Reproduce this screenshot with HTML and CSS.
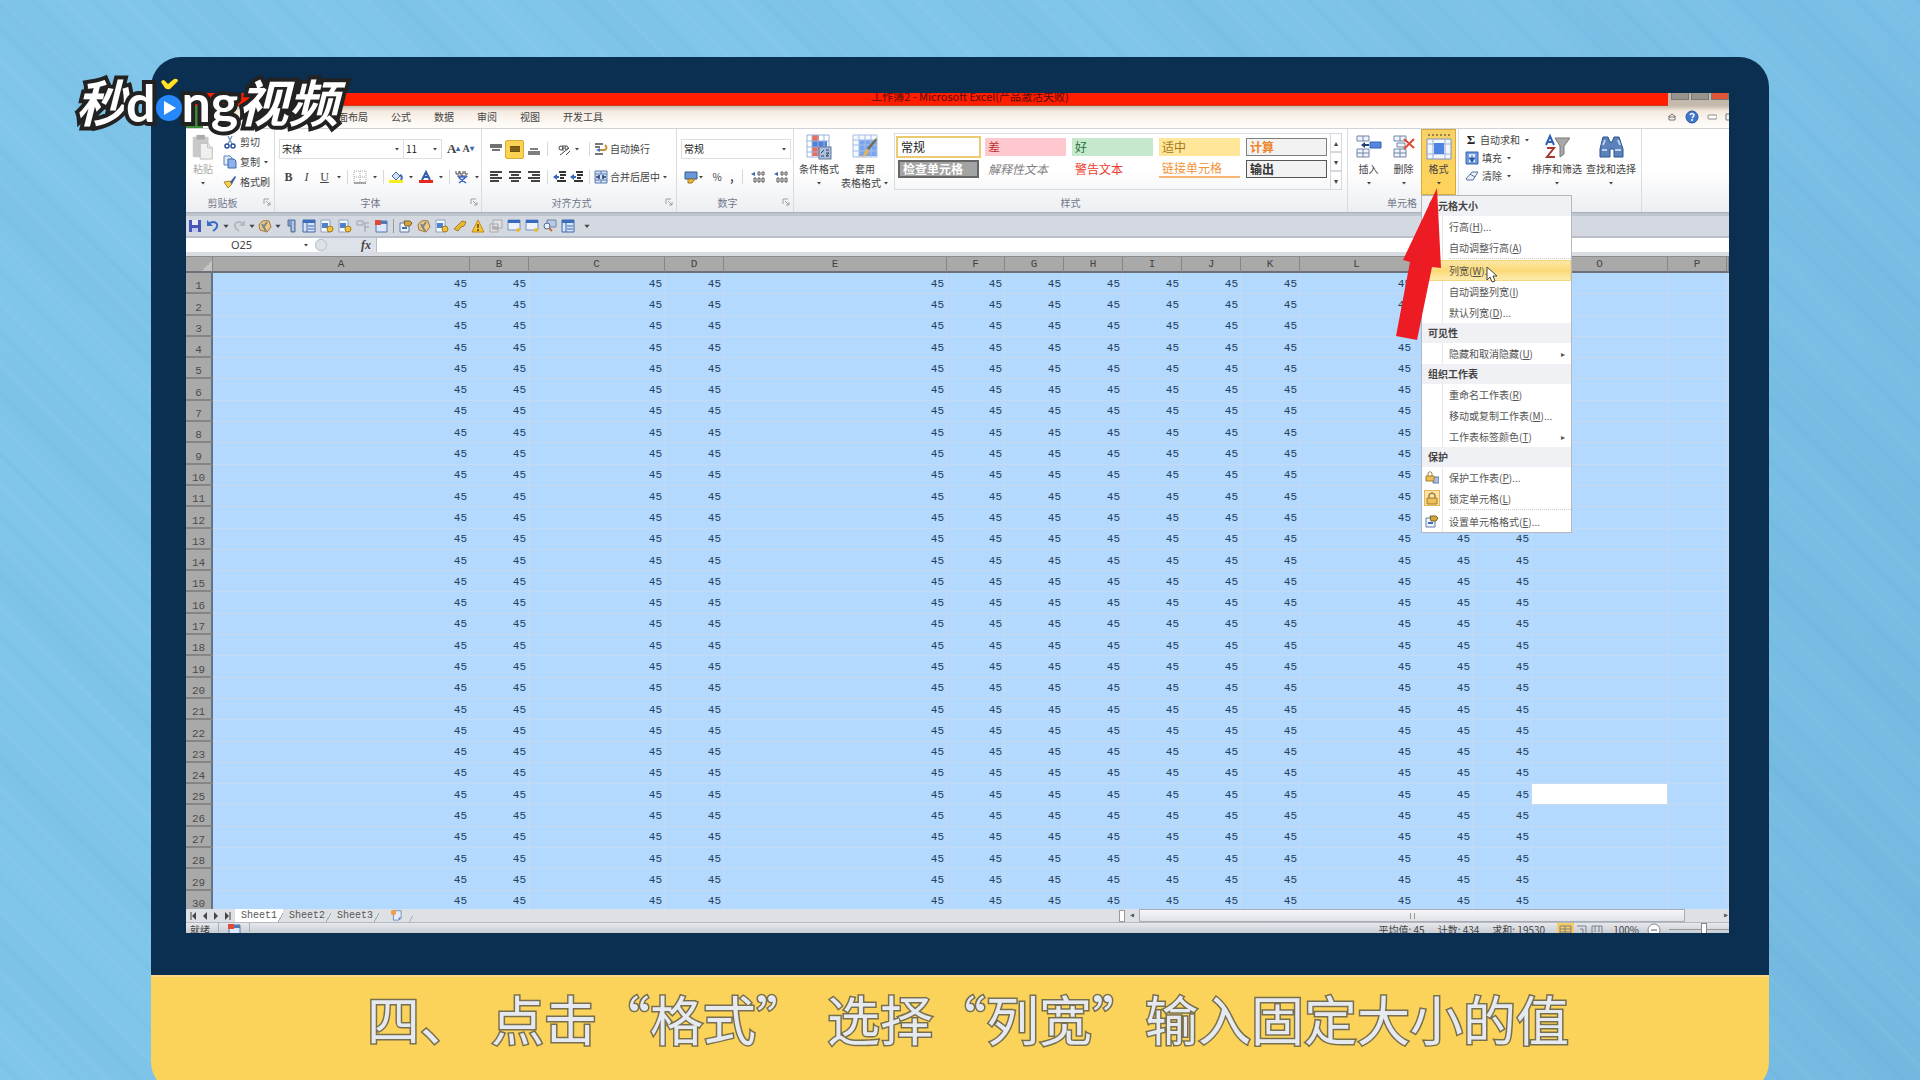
FILE: index.html
```
<!DOCTYPE html>
<html lang="zh-CN">
<head>
<meta charset="utf-8">
<title>秒dǒng视频</title>
<link rel="stylesheet" href="styles.css">
</head>
<body>
<svg class="defs" aria-hidden="true">
  <symbol id="caret" viewBox="0 0 6 6"><path d="M1 2h4L3 4.500z" fill="#444"/></symbol>
  <symbol id="launch" viewBox="0 0 8 8"><path d="M1 6V1h5M3 3l4 4M7 4v3H4" fill="none" stroke="#9a9fa8"/></symbol>
  <symbol id="paste" viewBox="0 0 24 28"><rect x="1" y="3" width="17" height="22" rx="1" fill="#c9c9c9"/><rect x="5" y="1" width="9" height="5" fill="#aaa"/><path d="M9 10h8l5 5v12H9z" fill="#f0f0f0" stroke="#bbb"/><path d="M17 10v5h5" fill="none" stroke="#bbb"/></symbol>
  <symbol id="cut" viewBox="0 0 14 14"><path d="M5 1l4 8M9 1L5 9" stroke="#7c9cc8" stroke-width="1.500"/><circle cx="4" cy="11" r="2" fill="none" stroke="#274f9e" stroke-width="1.500"/><circle cx="10" cy="11" r="2" fill="none" stroke="#274f9e" stroke-width="1.500"/></symbol>
  <symbol id="copy" viewBox="0 0 14 14"><path d="M1 1h6l2 2v7H1z" fill="#dfeafb" stroke="#5b83bd"/><path d="M5 4h6l2 2v7H5z" fill="#8db4ea" stroke="#3f69ad"/></symbol>
  <symbol id="brush" viewBox="0 0 14 14"><path d="M1 7l6-1 2 3-4 4z" fill="#f2cf52" stroke="#a9862b"/><path d="M7 7l5-6 1 1-4 7z" fill="#3c5d98"/></symbol>
  <symbol id="border" viewBox="0 0 14 14"><path d="M1 1h12v12H1zM7 1v12M1 7h12" fill="none" stroke="#aaa" stroke-dasharray="1 1"/><path d="M1 13h12" stroke="#666"/></symbol>
  <symbol id="fill" viewBox="0 0 14 14"><path d="M3 6l4-4 4 4-4 4z" fill="#cfe0f8" stroke="#3b66a8"/><path d="M11 5q3 1 1 5" stroke="#3b66a8" stroke-width="2" fill="none"/><path d="M0 10h14v3H0z" fill="#f7ec1c"/></symbol>
  <symbol id="fcolor" viewBox="0 0 14 14"><path d="M3 10l4-8 4 8M5 7h4" fill="none" stroke="#2f5daa" stroke-width="2"/><path d="M0 10h14v3H0z" fill="#e8281e"/></symbol>
  <symbol id="phon" viewBox="0 0 14 14"><path d="M1 1v3h3V1m1 0v3h3V1m2 0v3h3M2 6h10" fill="none" stroke="#444"/><path d="M7 5v2M3 7h8L4 13M4 8l7 5" stroke="#3a67c0" stroke-width="1.500" fill="none"/></symbol>
  <symbol id="vtop" viewBox="0 0 14 14"><path d="M1 3h12M1 5h12M3 8h8" stroke="#444" stroke-width="1.500"/></symbol>
  <symbol id="vmid" viewBox="0 0 14 14"><path d="M2 4h10v6H2z" fill="#6d5312"/><path d="M2 6h10M2 8h10" stroke="#8f6d18"/></symbol>
  <symbol id="vbot" viewBox="0 0 14 14"><path d="M3 7h8M1 10h12M1 12h12" stroke="#555" stroke-width="1.500"/></symbol>
  <symbol id="left" viewBox="0 0 14 14"><path d="M1 2h12M1 5h8M1 8h12M1 11h9" stroke="#444" stroke-width="2"/></symbol>
  <symbol id="center" viewBox="0 0 14 14"><path d="M1 2h12M3 5h8M1 8h12M3 11h8" stroke="#444" stroke-width="2"/></symbol>
  <symbol id="right" viewBox="0 0 14 14"><path d="M1 2h12M5 5h8M1 8h12M4 11h9" stroke="#444" stroke-width="2"/></symbol>
  <symbol id="indent" viewBox="0 0 14 14"><path d="M6 2h7M7 5h6M7 8h4M4 11h9" stroke="#333" stroke-width="2"/><path d="M0 7l4-3v2h2v2H4v2z" fill="#3567b5"/></symbol>
  <symbol id="orient" viewBox="0 0 14 14"><circle cx="4" cy="6" r="2" fill="none" stroke="#444"/><path d="M6 3v6M8 3v4q4 1 3-2-1-2-3 0M3 13L12 6M9 13l4-4" fill="none" stroke="#444"/></symbol>
  <symbol id="wrap" viewBox="0 0 14 14"><path d="M1 2h8M1 5h5M1 12h8" stroke="#777" stroke-width="2"/><path d="M4 8h7q3-2 0-5" fill="none" stroke="#c6903c" stroke-width="2"/><path d="M2 8l4-2v4z" fill="#4673bd"/></symbol>
  <symbol id="merge" viewBox="0 0 14 14"><path d="M1 1h12v12H1z" fill="#d2e1f6" stroke="#5a7cad"/><path d="M1 4h12M1 10h12M7 1v3M7 10v3" stroke="#5a7cad"/><path d="M2 7h3M12 7H9M5 5v4M9 5v4" stroke="#233d70" stroke-width="1.500"/></symbol>
  <symbol id="money" viewBox="0 0 14 14"><path d="M1 2h12v7H1z" fill="#6b97d8" stroke="#37588f"/><path d="M4 9h7l-3 4H4z" fill="#eab83f" stroke="#9b7424"/></symbol>
  <symbol id="dec" viewBox="0 0 14 14"><path d="M0 4l4-2v4z" fill="#3567b5"/><path d="M7 2h2v3H7zM11 2h2v3h-2zM3 8h2v4H3zM7 8h2v4H7zM11 8h2v4h-2z" fill="none" stroke="#555"/></symbol>
  <symbol id="cond" viewBox="0 0 26 26"><path d="M1 1h22v22H1z" fill="#fff"/><path d="M6 1h7v6H6zM6 13h7v9H6z" fill="#ee6b59"/><path d="M6 7h15v6H6z" fill="#4f80d8"/><path d="M1 1h22v22H1zM1 7h22M1 13h22M1 18h22M6 1v22M12 1v22M18 1v22" fill="none" stroke="#9bb2dc"/><rect x="13" y="13" width="12" height="12" fill="#aebfd9" stroke="#60769c"/><path d="M15 19l3-3M15 22h3M20 16h3M20 19h3l-3 3h3" stroke="#263d66" fill="none"/></symbol>
  <symbol id="tablefmt" viewBox="0 0 26 26"><path d="M1 1h24v22H1z" fill="#f4f8ff"/><path d="M7 6h18v16H7z" fill="#78a6ef"/><path d="M1 1h24v22H1zM1 6h24M1 11h24M1 17h24M7 1v22M13 1v22M19 1v22" fill="none" stroke="#a8bde4"/><path d="M25 6l-8 10-2-2 9-10z" fill="#7a6a50"/><path d="M17 16q-1 7-8 7 4-3 5-8z" fill="#e8b548"/></symbol>
  <symbol id="insert" viewBox="0 0 26 26"><path d="M1 2h12v5H1zM7 2v5M1 15h12v8H1zM7 15v8M1 19h12" fill="#eef4fd" stroke="#7385a6"/><path d="M14 8h11v6H14z" fill="#5687dc" stroke="#3564b5"/><path d="M5 11l4-3v2h4v2H9v2z" fill="#233f78"/></symbol>
  <symbol id="delete" viewBox="0 0 26 26"><path d="M3 2h12v5H3zM9 2v5M3 15h12v8H3zM9 15v8M3 19h12M6 9h8v4H6z" fill="#eef4fd" stroke="#7385a6"/><path d="M13 5l10 9M23 5L13 15" stroke="#e04a32" stroke-width="2"/></symbol>
  <symbol id="format" viewBox="0 0 26 26"><path d="M1 5h24v20H1z" fill="#f2f6fd" stroke="#7f93b8"/><path d="M1 10h24M1 20h24M7 5v20M19 5v20" stroke="#9cb1d6"/><path d="M8 9h10v11H8z" fill="#4d84e2"/><path d="M2 1h22" stroke="#333" stroke-dasharray="2 2"/></symbol>
  <symbol id="down" viewBox="0 0 14 14"><path d="M1 1h12v12H1z" fill="#6d9be0" stroke="#3c65a8"/><path d="M4 3h6v8H4z" fill="#e5effc"/><path d="M7 4v3M4 7h6l-3 4z" fill="#2d5dac" stroke="#2d5dac"/></symbol>
  <symbol id="eraser" viewBox="0 0 14 14"><path d="M1 10l6-7h6l-5 8H2z" fill="#eaf1fb" stroke="#58719c"/><path d="M5 5l5 3" stroke="#58719c"/></symbol>
  <symbol id="sort" viewBox="0 0 26 26"><path d="M2 11l4-9 4 9M4 8h5" fill="none" stroke="#2f5fb4" stroke-width="2"/><path d="M3 14h7l-7 9h8" fill="none" stroke="#a8382e" stroke-width="2"/><path d="M11 4h15l-6 8v8l-4 3V12z" fill="#a8a8a8" stroke="#777"/></symbol>
  <symbol id="find" viewBox="0 0 26 26"><path d="M5 3h5l2 5h2l2-5h5l4 12v8h-9v-8h-4v8H2v-8z" fill="#5c82bb" stroke="#2f5290"/><path d="M5 11l2-5M20 6l2 5M4 16h5M17 16h6" stroke="#bdd2f2" stroke-width="2"/></symbol>
  <symbol id="save" viewBox="0 0 14 14"><path d="M1 1h12v12H1z" fill="#4a55b8"/><path d="M4 1h6v5H4z" fill="#e9edfb"/><path d="M4 9h6v4H4z" fill="#c4cbef"/></symbol>
  <symbol id="undo" viewBox="0 0 14 14"><path d="M2 5q6-4 9 0 1 4-4 7" fill="none" stroke="#3a6cc6" stroke-width="2"/><path d="M1 1v6h6z" fill="#3a6cc6"/></symbol>
  <symbol id="redo" viewBox="0 0 14 14"><path d="M12 5Q6 1 3 5q-1 4 4 7" fill="none" stroke="#b3b8c2" stroke-width="2"/><path d="M13 1v6H7z" fill="#b3b8c2"/></symbol>
  <symbol id="palette" viewBox="0 0 14 14"><path d="M1 6q3-6 10-4l2 6-4 5-7-2z" fill="#ecca83" stroke="#a2783b"/><path d="M4 5l4 7M9 3l-4 6" stroke="#7d858f" stroke-width="2"/></symbol>
  <symbol id="pilcrow" viewBox="0 0 14 14"><path d="M4 1h7v12H7V7H4z" fill="#7f9cc6" stroke="#54729f"/><path d="M9 2v10" stroke="#e9f0fb"/></symbol>
  <symbol id="window" viewBox="0 0 14 14"><path d="M1 1h12v12H1z" fill="#d5e4f8" stroke="#3e67a9"/><path d="M1 1h12v3H1z" fill="#3e6dbb"/><path d="M5 4v9M6 7h6M6 10h6" stroke="#3e67a9"/></symbol>
  <symbol id="pagegear" viewBox="0 0 14 14"><path d="M1 1h9v12H1z" fill="#f5f8fd" stroke="#8aa0c2"/><path d="M2 4h6v5H2z" fill="#4f82cb"/><circle cx="10" cy="10" r="3" fill="#eec13e" stroke="#a57b1f"/></symbol>
  <symbol id="greyform" viewBox="0 0 14 14"><path d="M1 2h6v4H1zM8 4h5M8 8h5M9 4v9" fill="none" stroke="#9ba1ab"/></symbol>
  <symbol id="calendar" viewBox="0 0 14 14"><path d="M2 2h11v11H2z" fill="#dbe7fa" stroke="#5078b5"/><path d="M1 1h6v5H1z" fill="#df4936"/><path d="M7 2h6v3H7z" fill="#5078b5"/></symbol>
  <symbol id="newsheet" viewBox="0 0 14 14"><path d="M4 2h9v9l-3 2H4z" fill="#e3ecfa" stroke="#6c87b8"/><path d="M10 13v-3h3" fill="#5b83c9"/><circle cx="4" cy="4" r="3" fill="#efa044"/></symbol>
  <symbol id="props" viewBox="0 0 14 14"><path d="M1 4h9v9H1z" fill="#eef3fb" stroke="#5e7ba8"/><path d="M5 2h6l2 2-2 3H6z" fill="#d5a63b" stroke="#7a622b"/><path d="M3 9h5" stroke="#3e6dbb" stroke-width="2"/></symbol>
  <symbol id="link" viewBox="0 0 14 14"><path d="M1 10l4-4 4-4 4 1-2 4-3 1-3 4z" fill="#e7b932" stroke="#a67e20"/></symbol>
  <symbol id="warn" viewBox="0 0 14 14"><path d="M7 1l6 12H1z" fill="#f6c632" stroke="#bd891b"/><path d="M7 5v4M7 10v2" stroke="#5d4411" stroke-width="1.500"/></symbol>
  <symbol id="greypages" viewBox="0 0 14 14"><path d="M4 1h9v8H4zM1 5h8v8H1z" fill="#e1e1e3" stroke="#a7a7ab"/><path d="M3 8h6M3 10h6" stroke="#999"/></symbol>
  <symbol id="wingear" viewBox="0 0 14 14"><path d="M1 1h12v10H1z" fill="#eef4fd" stroke="#7390bd"/><path d="M1 1h12v3H1z" fill="#376ac2"/><circle cx="11" cy="11" r="2" fill="#ecbb36"/></symbol>
  <symbol id="lens" viewBox="0 0 14 14"><path d="M4 1h9v7H4z" fill="#b9cae3" stroke="#6e84a8"/><circle cx="4" cy="7" r="3" fill="#eaf2fd" stroke="#4c6796"/><path d="M6 9l3 3" stroke="#c46f2d" stroke-width="2"/></symbol>
  <symbol id="lock" viewBox="0 0 14 14"><path d="M4 7V4q3-4 6 0v3" fill="none" stroke="#a48343" stroke-width="1.500"/><path d="M2 7h10v6H2z" fill="#ecbf58" stroke="#a57b2c"/></symbol>
  <symbol id="locksheet" viewBox="0 0 14 14"><path d="M8 7h6v6H8z" fill="#a8bddf" stroke="#5f7baa"/><path d="M3 6V3q2-3 4 0v3" fill="none" stroke="#a48343"/><path d="M1 6h8v5H1z" fill="#ecbf58" stroke="#a57b2c"/></symbol>
</svg>

<header class="logo" aria-label="秒dǒng视频">
  <span class="logo-cn">秒</span><span class="logo-en">d</span>
  <svg class="logo-o" viewBox="0 0 26 46"><path d="M5 5q2-4 5 0l2 2 6-5q4-1 4 2l-8 8q-3 1-5-1z" fill="#ffe32a" stroke="#222" stroke-width="1"/><circle cx="13" cy="31" r="13" fill="#2589fb"/><path d="M8 24v14l12-7z" fill="#fff"/></svg>
  <span class="logo-en">ng</span><span class="logo-cn">视频</span>
</header>

<main class="monitor">
  <section class="screen">
    <div class="titlebar"><span>工作簿2 - Microsoft Excel(产品激活失败)</span>
      <div class="winbtns"><i></i><i></i><i class="close"></i></div>
    </div>
    <nav class="tabs">
      <button class="file" aria-label="文件"></button>
      <button>页面布局</button><button>公式</button><button>数据</button><button>审阅</button><button>视图</button><button>开发工具</button>
      <div class="tabs-right">
        <svg width="10" height="10" viewBox="0 0 10 10"><path d="M1 5l4-3 4 3M2 8h6V5H2z" fill="none" stroke="#777"/></svg>
        <svg width="14" height="14" viewBox="0 0 14 14"><circle cx="7" cy="7" r="6" fill="#3f78cc" stroke="#2a5699"/><path d="M5 5q2-3 4 0 0 1-2 3M7 9v2" fill="none" stroke="#fff" stroke-width="1.500"/></svg>
        <svg width="10" height="10" viewBox="0 0 10 10"><rect x="1" y="3" width="9" height="4" rx="1" fill="#fff" stroke="#888"/></svg>
        <svg width="4" height="10" viewBox="0 0 4 10"><path d="M4 2H1v6h3" fill="none" stroke="#777"/></svg>
      </div>
    </nav>

    <div class="ribbon">
      <section class="group g-clip">
        <div class="body">
          <button class="big dim"><svg class="i26"><use href="#paste"/></svg>粘贴<svg class="car"><use href="#caret"/></svg></button>
          <div class="stack">
            <button><svg class="i14"><use href="#cut"/></svg>剪切</button>
            <button><svg class="i14"><use href="#copy"/></svg>复制<svg class="car"><use href="#caret"/></svg></button>
            <button><svg class="i14"><use href="#brush"/></svg>格式刷</button>
          </div>
        </div>
        <h2>剪贴板</h2><svg class="launch"><use href="#launch"/></svg>
      </section>

      <section class="group g-font">
        <div class="body rows">
          <div class="line">
            <span class="combo fontname"><select aria-label="字体"><option>宋体</option></select><svg class="car"><use href="#caret"/></svg></span>
            <span class="combo size"><select aria-label="字号"><option>11</option></select><svg class="car"><use href="#caret"/></svg></span>
            <button class="grow">A<sup>▴</sup></button><button class="grow small">A<sup>▾</sup></button>
          </div>
          <div class="line fontstyle">
            <button class="serif"><b>B</b></button><button class="serif"><i>I</i></button><button class="serif"><u>U</u></button><svg class="car"><use href="#caret"/></svg>
            <i class="vsep"></i>
            <button><svg class="i14"><use href="#border"/></svg></button><svg class="car"><use href="#caret"/></svg>
            <i class="vsep"></i>
            <button><svg class="i14"><use href="#fill"/></svg></button><svg class="car"><use href="#caret"/></svg>
            <button><svg class="i14"><use href="#fcolor"/></svg></button><svg class="car"><use href="#caret"/></svg>
            <i class="vsep"></i>
            <button><svg class="i14"><use href="#phon"/></svg></button><svg class="car"><use href="#caret"/></svg>
          </div>
        </div>
        <h2>字体</h2><svg class="launch"><use href="#launch"/></svg>
      </section>

      <section class="group g-align">
        <div class="body rows">
          <div class="line">
            <button class="cell"><svg class="i14"><use href="#vtop"/></svg></button><button class="cell on"><svg class="i14"><use href="#vmid"/></svg></button><button class="cell"><svg class="i14"><use href="#vbot"/></svg></button>
            <i class="vsep"></i>
            <button class="pair"><svg class="i14"><use href="#orient"/></svg><svg class="car"><use href="#caret"/></svg></button>
            <i class="vsep"></i>
            <button class="txt"><svg class="i14"><use href="#wrap"/></svg>自动换行</button>
          </div>
          <div class="line">
            <button class="cell"><svg class="i14"><use href="#left"/></svg></button><button class="cell"><svg class="i14"><use href="#center"/></svg></button><button class="cell"><svg class="i14"><use href="#right"/></svg></button>
            <i class="vsep"></i>
            <button class="pair"><svg class="i14"><use href="#indent"/></svg><svg class="i14"><use href="#indent"/></svg></button>
            <i class="vsep"></i>
            <button class="txt"><svg class="i14"><use href="#merge"/></svg>合并后居中<svg class="car"><use href="#caret"/></svg></button>
          </div>
        </div>
        <h2>对齐方式</h2><svg class="launch"><use href="#launch"/></svg>
      </section>

      <section class="group g-num">
        <div class="body rows">
          <div class="line"><span class="combo numfmt"><select aria-label="数字格式"><option>常规</option></select><svg class="car"><use href="#caret"/></svg></span></div>
          <div class="line spread">
            <button><svg class="i14"><use href="#money"/></svg><svg class="car"><use href="#caret"/></svg></button><button>%</button><button><b>,</b></button><i class="vsep"></i>
            <button><svg class="i14"><use href="#dec"/></svg></button><button><svg class="i14"><use href="#dec"/></svg></button>
          </div>
        </div>
        <h2>数字</h2><svg class="launch"><use href="#launch"/></svg>
      </section>

      <section class="group g-style">
        <div class="body">
          <button class="big"><svg class="i26"><use href="#cond"/></svg>条件格式<svg class="car"><use href="#caret"/></svg></button>
          <button class="big"><svg class="i26"><use href="#tablefmt"/></svg>套用<span>表格格式<svg class="car"><use href="#caret"/></svg></span></button>
          <div class="gallery">
            <button class="s-normal">常规</button><button class="s-bad">差</button><button class="s-good">好</button><button class="s-mid">适中</button><button class="s-calc">计算</button>
            <button class="s-check">检查单元格</button><button class="s-note">解释性文本</button><button class="s-warn">警告文本</button><button class="s-linked">链接单元格</button><button class="s-out">输出</button>
          </div>
          <div class="galbtns"><button aria-label="上移">▴</button><button aria-label="下移">▾</button><button aria-label="更多">▾</button></div>
        </div>
        <h2>样式</h2>
      </section>

      <section class="group g-cells">
        <div class="body">
          <button class="big"><svg class="i26"><use href="#insert"/></svg>插入<svg class="car"><use href="#caret"/></svg></button>
          <button class="big"><svg class="i26"><use href="#delete"/></svg>删除<svg class="car"><use href="#caret"/></svg></button>
          <button class="big active"><svg class="i26"><use href="#format"/></svg>格式<svg class="car"><use href="#caret"/></svg></button>
        </div>
        <h2>单元格</h2>
      </section>

      <section class="group g-edit">
        <div class="body">
          <div class="stack">
            <button><b class="sigma">Σ</b>自动求和<svg class="car"><use href="#caret"/></svg></button>
            <button><svg class="i14"><use href="#down"/></svg>填充<svg class="car"><use href="#caret"/></svg></button>
            <button><svg class="i14"><use href="#eraser"/></svg>清除<svg class="car"><use href="#caret"/></svg></button>
          </div>
          <button class="big"><svg class="i26"><use href="#sort"/></svg>排序和筛选<svg class="car"><use href="#caret"/></svg></button>
          <button class="big"><svg class="i26"><use href="#find"/></svg>查找和选择<svg class="car"><use href="#caret"/></svg></button>
        </div>
      </section>
    </div>

    <div class="qat">
      <svg><use href="#save"/></svg><svg><use href="#undo"/></svg><svg class="car"><use href="#caret"/></svg><svg><use href="#redo"/></svg><svg class="car"><use href="#caret"/></svg><svg><use href="#palette"/></svg><svg class="car"><use href="#caret"/></svg><svg><use href="#pilcrow"/></svg><svg><use href="#window"/></svg><svg><use href="#pagegear"/></svg><svg><use href="#pagegear"/></svg><svg><use href="#greyform"/></svg><svg><use href="#calendar"/></svg><i class="vsep"></i><svg><use href="#props"/></svg><svg><use href="#palette"/></svg><svg><use href="#pagegear"/></svg><svg><use href="#link"/></svg><svg><use href="#warn"/></svg><svg><use href="#greypages"/></svg><svg><use href="#wingear"/></svg><svg><use href="#wingear"/></svg><svg><use href="#lens"/></svg><svg><use href="#window"/></svg><svg class="car last"><use href="#caret"/></svg>
    </div>

    <div class="formulabar">
      <input class="namebox" value="O25" aria-label="名称框"><svg class="car"><use href="#caret"/></svg>
      <span class="fx"><i></i><em>fx</em></span>
      <input class="formula" aria-label="编辑栏">
    </div>

    <div class="sheet">
      <table>
        <colgroup id="cols"></colgroup>
        <thead><tr id="letters"></tr></thead>
        <tbody id="rows"></tbody>
      </table>
    </div>

    <div class="sheetbar">
      <svg class="navs" viewBox="0 0 48 10"><path d="M5 1v8M44 1v8" stroke="#444"/><path d="M10 1v8L6 5zM21 1v8l-4-4zM28 1v8l4-4zM39 1v8l4-4z" fill="#444"/></svg>
      <button class="on">Sheet1</button><button>Sheet2</button><button>Sheet3</button>
      <button class="new" aria-label="插入工作表"><svg class="i12"><use href="#newsheet"/></svg></button>
      <div class="hscroll"><i class="split"></i><span>◂</span><i class="thumb"><b></b></i><span class="end">▸</span></div>
    </div>
    <footer class="status">
      <span>就绪</span><i></i><svg class="i14"><use href="#calendar"/></svg><i></i>
      <div class="stats"><span>平均值: 45</span><span>计数: 434</span><span>求和: 19530</span></div>
      <svg class="views" viewBox="0 0 48 14"><rect width="17" height="14" fill="#f8cc62"/><path d="M3 3h11v9H3zM3 6h11M3 9h11M8 3v9M20 3h9v9h-9M23 6h3v6M35 3h10v9H35zM38 3v6M42 3v6" fill="none" stroke="#7a8088"/></svg>
      <span class="pct">100%</span>
      <svg class="minus" viewBox="0 0 14 14"><circle cx="7" cy="7" r="6" fill="#fff" stroke="#888"/><path d="M4 7h6" stroke="#555"/></svg>
      <input type="range" aria-label="缩放" min="0" max="100" value="60">
    </footer>

    <div class="menu" role="menu">
      <h3>单元格大小</h3>
      <button>行高(<u>H</u>)...</button>
      <button>自动调整行高(<u>A</u>)</button>
      <hr>
      <button class="hover">列宽(<u>W</u>)...</button>
      <button>自动调整列宽(<u>I</u>)</button>
      <button>默认列宽(<u>D</u>)...</button>
      <h3>可见性</h3>
      <button class="sub">隐藏和取消隐藏(<u>U</u>)</button>
      <h3>组织工作表</h3>
      <button>重命名工作表(<u>R</u>)</button>
      <button>移动或复制工作表(<u>M</u>)...</button>
      <button class="sub">工作表标签颜色(<u>T</u>)</button>
      <h3>保护</h3>
      <button><svg class="i14"><use href="#locksheet"/></svg>保护工作表(<u>P</u>)...</button>
      <button><svg class="i14 checked"><use href="#lock"/></svg>锁定单元格(<u>L</u>)</button>
      <hr>
      <button><svg class="i14"><use href="#props"/></svg>设置单元格格式(<u>E</u>)...</button>
    </div>
    <svg class="arrow" viewBox="0 0 48 154"><path d="M42 1l4 80-9-1-15 73-21-4 14-74-7-2z" fill="#ed1c24"/></svg>
    <svg class="cursor" viewBox="0 0 12 18"><path d="M1 1v13l3-3 2 5 3-1-2-5h4z" fill="#fff" stroke="#444"/></svg>
  </section>
</main>

<div class="caption"><span>四、</span><span>点击“格式”</span><span>选择“列宽”输入固定大小的值</span></div>
<script src="sheet.js"></script>
</body>
</html>
```
FILE: sheet.js
```
const columns = [
  ["A", 257], ["B", 59], ["C", 136], ["D", 59], ["E", 223], ["F", 58], ["G", 59], ["H", 59],
  ["I", 59], ["J", 59], ["K", 59], ["L", 114], ["M", 59], ["N", 59], ["O", 136], ["P", 59], ["", 0]
];
const filled = 14;

document.getElementById("cols").innerHTML =
  '<col style="width:27px">' +
  columns.map(([, w]) => (w ? `<col style="width:${w}px">` : "<col>")).join("");
document.getElementById("letters").innerHTML =
  '<th class="corner"></th>' + columns.map(([name]) => `<th scope="col">${name}</th>`).join("");

let rows = "";
for (let r = 1; r <= 30; r++) {
  rows += `<tr><th scope="row">${r}</th>`;
  columns.forEach(([name], i) => {
    const active = r === 25 && name === "O" ? ' class="active"' : "";
    rows += `<td${active}>${i < filled ? 45 : ""}</td>`;
  });
  rows += "</tr>";
}
document.getElementById("rows").innerHTML = rows;
```
FILE: styles.css
```
* { box-sizing: border-box; }
body {
  margin: 0;
  min-height: 100vh;
  padding: 57px 151px 0;
  position: relative;
  overflow: hidden;
  display: flex;
  flex-direction: column;
  color: #444;
  font: 10px/14px "Noto Sans CJK SC", sans-serif;
  background:
    repeating-linear-gradient(45deg, rgba(70,140,185,0) 0 9px, rgba(70,140,185,.06) 12px 13px, rgba(70,140,185,0) 17px 31px, rgba(255,255,255,.04) 34px, rgba(70,140,185,0) 37px 43px),
    repeating-linear-gradient(44deg, rgba(70,140,185,0) 0 50px, rgba(70,140,185,.05) 90px, rgba(70,140,185,0) 137px),
    linear-gradient(120deg, #80c6eb 40%, #76bae1);
}
.defs { position: absolute; width: 0; height: 0; }
button, input, select { font: inherit; color: inherit; border: 0; padding: 0; margin: 0; background: none; }
button { white-space: nowrap; }
h2, h3 { margin: 0; font: inherit; }
svg { flex: none; display: block; }
.i12 { width: 12px; height: 12px; }
.i14 { width: 14px; height: 14px; }
.i26 { width: 26px; height: 26px; }
.car { width: 6px; height: 6px; }
.vsep { width: 1px; height: 14px; background: #d5d8dd; flex: none; }

.logo {
  position: absolute;
  z-index: 5;
  left: 76px;
  top: 70px;
  display: flex;
  align-items: center;
  height: 60px;
  color: #fff;
  -webkit-text-stroke: 8px #222;
  paint-order: stroke fill;
}
.logo-cn { font-size: 50px; line-height: 60px; font-weight: 700; font-style: italic; }
.logo-en { font: 700 52px/60px Lato, sans-serif; margin-top: 4px; }
.logo-o { width: 26px; height: 46px; position: relative; z-index: 1; }

.monitor { background: #0b2f50; border-radius: 30px 30px 0 0; padding: 36px 40px 43px 35px; }
.screen { position: relative; background: #fff; overflow: hidden; }

.titlebar {
  height: 13px;
  background: #ff1e00;
  border-bottom: 1px solid #d63a20;
  display: flex;
  justify-content: center;
  position: relative;
  color: #5a0a00;
  font-size: 11px;
  line-height: 6px;
}
.titlebar span { margin-left: 25px; }
.winbtns { position: absolute; right: 0; top: 0; width: 61px; height: 13px; display: flex; gap: 2px; padding: 0 0 6px 3px; background: #c5b9ae; }
.winbtns i { flex: 1; background: #99938d; border: 1px solid #777; border-top: 0; }
.winbtns .close { background: #e05535; }

.tabs {
  height: 23px;
  display: flex;
  align-items: center;
  gap: 23px;
  background: linear-gradient(#c9bdab, #f3e9df 5px, #fbf4ed 12px, #fffdfb);
  border-bottom: 1px solid #cfd2d8;
}
.tabs .file { width: 17px; height: 22px; background: #3f8b3c; margin-right: 102px; }
.tabs-right { margin-left: auto; display: flex; align-items: center; gap: 8px; }

.ribbon { height: 84px; display: flex; background: linear-gradient(#fff 50%, #eceef1); border-bottom: 1px solid #a9b1bc; }
.group { position: relative; display: flex; flex-direction: column; justify-content: space-between; border-right: 1px solid #d8dbe0; padding-bottom: 2px; }
.group h2 { text-align: center; color: #70788a; padding-right: 15px; }
.body { display: flex; }
.body button { display: flex; align-items: center; justify-content: center; }
.launch { position: absolute; right: 3px; bottom: 6px; width: 8px; height: 8px; }
.stack { display: flex; flex-direction: column; gap: 5px; }
.stack button { gap: 3px; justify-content: flex-start; height: 14px; }
.body .big { flex-direction: column; justify-content: flex-start; padding-top: 5px; line-height: 14px; }
.big .i26 { margin-bottom: 2px; }
.big .car { margin-top: 4px; }
.big span { display: flex; gap: 2px; align-items: center; }
.big span .car { margin: 0; }
.dim { color: #aaa; }
.rows { flex-direction: column; gap: 8px; padding-top: 10px; }
.line { display: flex; align-items: center; height: 20px; }
.combo { display: flex; align-items: center; justify-content: space-between; height: 20px; border: 1px solid #dcdfe3; background: #fff; padding: 0 3px 0 2px; }
.combo select { appearance: none; flex: 1; min-width: 0; color: #222; }

.g-clip { width: 89px; }
.g-clip .big { width: 34px; }
.g-clip .stack { padding: 6px 0 0 3px; gap: 6px; }
.g-font { width: 207px; }
.g-font .rows { padding-left: 4px; }
.fontname { width: 125px; }
.size { width: 38px; border-left: 0; }
.grow { font: 700 13px/14px "Liberation Serif", serif; margin-left: 5px; }
.grow.small { font-size: 10px; margin-left: 2px; }
.grow sup { font-size: 8px; line-height: 8px; color: #3567b5; }
.fontstyle { gap: 5px; padding-left: 3px; }
.serif { width: 13px; font: 12px/14px "Liberation Serif", serif; }
.g-align { width: 195px; }
.g-align .rows { padding-left: 4px; }
.cell { width: 19px; height: 19px; }
.cell.on { background: #fbd353; border: 1px solid #dca93a; border-radius: 2px; }
.g-align .vsep { margin: 0 4px; }
.pair { width: 33px; gap: 3px; }
.txt { gap: 2px; }
.g-num { width: 117px; }
.g-num .rows { padding: 10px 2px 0 4px; }
.numfmt { width: 111px; }
.spread { justify-content: space-between; padding: 0 3px; }

.g-style { width: 554px; }
.g-style .body { padding-left: 3px; }
.g-style .big { width: 48px; }
.g-style .body > :first-child { width: 44px; }
.g-style h2 { padding: 0; }
.gallery {
  margin: 4px 0 0 5px;
  display: grid;
  grid-template-columns: repeat(5, 81px);
  grid-auto-rows: 18px;
  gap: 4px 6px;
  padding: 4px 3px;
  border: 1px solid #d8dbe0;
  border-right: 0;
}
.gallery button { justify-content: flex-start; padding: 0 3px; font-size: 12px; line-height: 14px; }
.gallery .s-normal { color: #222; outline: 2px solid #ecca72; background: #fff; }
.gallery .s-bad { background: #ffc7ce; color: #b8322f; }
.gallery .s-good { background: #c6e9cd; color: #1f7038; }
.gallery .s-mid { background: #ffe699; color: #a6741c; }
.gallery .s-calc { background: #f2f2f2; color: #f08228; font-weight: 700; border: 1px solid #7f7f7f; }
.gallery .s-check { background: #a3a3a3; color: #fff; font-weight: 700; border: 2px solid #666; }
.gallery .s-note { color: #7f7f7f; font-style: italic; }
.gallery .s-warn { color: #ee3a28; }
.gallery .s-linked { color: #f39338; border-bottom: 2px solid #fbb676; }
.gallery .s-out { background: #f2f2f2; color: #333; font-weight: 700; border: 1px solid #555; }
.galbtns { margin-top: 4px; width: 12px; display: grid; grid-template-rows: repeat(3, 1fr); }
.galbtns button { border: 1px solid #d5d8dd; font-size: 8px; line-height: 8px; }

.g-cells { width: 111px; }
.g-cells .body { padding-left: 3px; }
.g-cells .big { width: 35px; }
.g-cells h2 { text-align: right; padding-right: 41px; }
.g-cells .active { height: 66px; background: linear-gradient(#f8d268, #ffd35a); border: 1px solid #d7a941; padding-top: 4px; }
.g-edit { width: 183px; }
.g-edit .stack { width: 71px; padding: 4px 0 0 6px; gap: 4px; }
.g-edit .stack .car { margin-left: 1px; }
.g-edit .big { width: 54px; }
.sigma { width: 14px; text-align: center; font: 700 13px/14px "Liberation Serif", serif; color: #222; }

.qat { height: 25px; display: flex; align-items: center; background: #d4d9e1; border-top: 3px solid #bcc4ce; border-bottom: 2px solid #b9c0ca; }
.qat svg { width: 14px; height: 14px; margin: 0 2px; }
.qat .car { width: 8px; height: 8px; margin: 0; }
.qat .last { margin-left: 6px; }
.qat .vsep { margin: 0 3px; background: #999; }

.formulabar { height: 18px; display: flex; align-items: center; background: #fff; border-bottom: 4px solid #d9dce2; color: #444; }
.namebox { width: 117px; text-align: center; padding-right: 6px; height: 14px; font: 11px/14px "Noto Sans", sans-serif; }
.fx { margin-left: 6px; width: 62px; height: 14px; display: flex; align-items: center; justify-content: space-between; background: #dde1e8; border-radius: 7px 0 0 7px; padding-right: 5px; border-right: 1px solid #b6bcc6; }
.fx i { width: 12px; height: 12px; border: 1px solid #bcc2cb; border-radius: 6px; }
.fx em { font: italic 700 12px/12px "Liberation Serif", serif; }
.formula { flex: 1; min-width: 0; }

.sheet { height: 653px; overflow: hidden; }
table { width: 100%; height: 656px; table-layout: fixed; border-collapse: separate; border-spacing: 0; background: #b3d9ff; font: 11px/14px "Liberation Mono", monospace; color: #24405c; }
td, th { padding: 0; font-weight: 400; overflow: hidden; }
thead th { height: 17px; background: #a9a9a9; border-right: 1px solid #858585; border-bottom: 2px solid #6b7178; border-top: 1px solid #8b8b8b; color: #444; line-height: 12px; }
tbody th { background: #a9a9a9; border-bottom: 2px solid #858585; border-right: 2px solid #5f7489; color: #4c4c4c; line-height: 12px; vertical-align: bottom; }
.corner { background: linear-gradient(135deg, #a9a9a9 75%, #c4c4c4 75%); }
td { text-align: right; padding: 1px 2px 0 0; border-right: 1px solid #c6d9ee; border-bottom: 1px solid #c6d9ee; }
td.active { background: #fff; }

.sheetbar { height: 14px; display: flex; align-items: stretch; background: #dde1e6; border-bottom: 1px solid #b5bac2; font: 10px/13px "Liberation Mono", monospace; color: #555; }
.navs { width: 48px; height: 10px; align-self: center; margin-right: 1px; }
.sheetbar button { width: 48px; background: linear-gradient(120deg, transparent 90%, #a5abb4 90% 92%, transparent 92%); }
.sheetbar .on { background: linear-gradient(120deg, #fff 90%, #a5abb4 90% 92%, transparent 92%); }
.sheetbar .new { width: 34px; display: flex; justify-content: center; }
.hscroll { margin-left: auto; width: 610px; display: flex; align-items: center; gap: 4px; }
.split { width: 6px; height: 12px; background: #fff; border: 1px solid #999; }
.thumb { flex: 1; height: 13px; border: 1px solid #a8adb5; background: linear-gradient(#f5f6f8, #dfe2e7); display: flex; align-items: center; justify-content: center; }
.thumb b { width: 5px; height: 6px; border: 1px solid #999; border-width: 0 1px; }
.hscroll .end { margin-left: 34px; }
.status { height: 10px; overflow: hidden; display: flex; align-items: flex-start; gap: 8px; background: linear-gradient(#e6e8ec, #c9cdd4); padding-left: 4px; line-height: 14px; }
.status > i { width: 1px; height: 9px; background: #a9aeb6; }
.stats { margin-left: auto; display: flex; gap: 13px; }
.views { width: 48px; height: 14px; margin-left: 4px; }
.status input { width: 60px; height: 12px; appearance: none; background: linear-gradient(#999, #999) center / 100% 1px no-repeat; }
.status input::-webkit-slider-thumb { appearance: none; width: 6px; height: 12px; background: #fff; border: 1px solid #888; }
.minus { width: 14px; height: 14px; }

.menu {
  position: absolute;
  left: 1235px;
  top: 102px;
  width: 151px;
  background: linear-gradient(90deg, transparent 20px, #e5e6ea 20px 21px, transparent 21px), #fff;
  border: 1px solid #b4b9c1;
}
.menu h3 { height: 20px; line-height: 20px; background: #f0f1f5; padding-left: 6px; font-weight: 700; }
.menu button { position: relative; display: block; width: 100%; height: 21px; line-height: 21px; text-align: left; padding-left: 27px; color: #555; }
.menu hr { height: 2px; margin: 0 0 0 27px; border: 0; border-top: 1px dotted #ccc; }
.menu .hover { background: linear-gradient(#fbe8a8, #fbd977 50%, #fdeeb5); outline: 1px solid #f2d77d; outline-offset: -1px; }
.menu svg { position: absolute; left: 3px; top: 3px; }
.menu .checked { background: #fde3a5; outline: 1px solid #e8b558; }
.sub::after { content: "▸"; position: absolute; right: 6px; top: 0; font-size: 8px; }
.arrow { position: absolute; left: 1209px; top: 94px; width: 48px; height: 154px; }
.cursor { position: absolute; left: 1300px; top: 173px; width: 12px; height: 18px; }

.monitor { padding-bottom: 42px; }
.caption {
  height: 117px;
  margin-bottom: -12px;
  padding: 11px 0 0 16px;
  display: flex;
  justify-content: center;
  gap: 18px;
  background: #fcd35a;
  border-top: 2px solid #ffd98a;
  border-radius: 0 0 30px 30px;
  color: #e6e9f0;
  font-size: 53px;
  line-height: 60px;
  white-space: nowrap;
  -webkit-text-stroke: 3px #77704f;
  paint-order: stroke fill;
}
```
